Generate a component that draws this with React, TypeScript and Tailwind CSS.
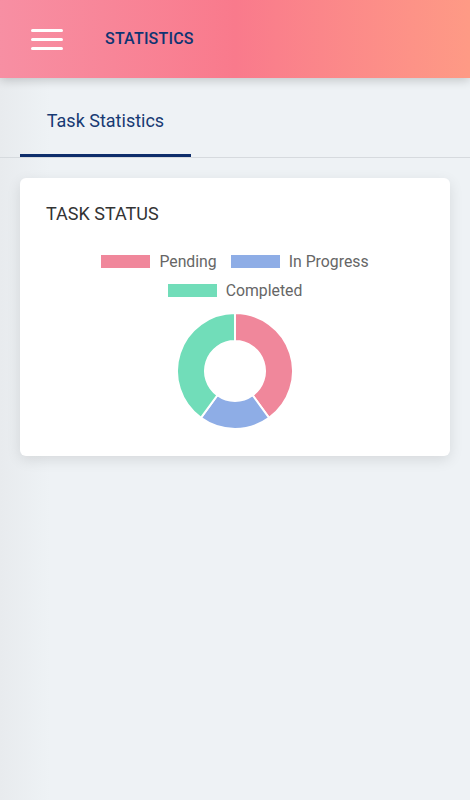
import React from "react";

const slices = [
  { label: "Pending", value: 2, color: "#f0879b" },
  { label: "In Progress", value: 1, color: "#8eade6" },
  { label: "Completed", value: 2, color: "#71ddb9" },
];

function arcPath(cx: number, cy: number, r1: number, r2: number, a0: number, a1: number) {
  const p = (r: number, a: number) => [cx + r * Math.sin(a), cy - r * Math.cos(a)];
  const [x0, y0] = p(r2, a0);
  const [x1, y1] = p(r2, a1);
  const [x2, y2] = p(r1, a1);
  const [x3, y3] = p(r1, a0);
  const large = a1 - a0 > Math.PI ? 1 : 0;
  return `M${x0} ${y0} A${r2} ${r2} 0 ${large} 1 ${x1} ${y1} L${x2} ${y2} A${r1} ${r1} 0 ${large} 0 ${x3} ${y3} Z`;
}

function Donut() {
  const total = slices.reduce((s, d) => s + d.value, 0);
  let start = 0;
  return (
    <svg width="120" height="120" viewBox="0 0 120 120">
      {slices.map((s) => {
        const a0 = start;
        const a1 = start + (s.value / total) * Math.PI * 2;
        start = a1;
        return (
          <path
            key={s.label}
            d={arcPath(60, 60, 30, 58, a0, a1)}
            fill={s.color}
            stroke="#fff"
            strokeWidth="2"
          />
        );
      })}
    </svg>
  );
}

function LegendItem({ label, color }: { label: string; color: string }) {
  return (
    <div className="flex items-center gap-[9px]">
      <span className="h-[13px] w-[49px]" style={{ backgroundColor: color }} />
      <span className="text-[15.8px] text-[#666]">{label}</span>
    </div>
  );
}

export default function App() {
  return (
    <div
      className="relative min-h-[800px] w-full overflow-hidden bg-[#eef2f5]"
      style={{ fontFamily: "Roboto, 'Noto Sans', sans-serif" }}
    >
      <div className="pointer-events-none absolute inset-y-0 left-0 w-[50px] bg-gradient-to-r from-[#e8ebee] to-transparent" />
      <header className="relative z-10 flex h-[78px] items-center bg-gradient-to-r from-[#f78fa3] via-[#f97a8c] to-[#fe9a85] shadow-[0_2px_10px_rgba(0,0,0,0.2)]">
        <div className="ml-[31px] flex w-[32px] flex-col gap-[6px]">
          <span className="h-[3px] w-full rounded bg-white" />
          <span className="h-[3px] w-full rounded bg-white" />
          <span className="h-[3px] w-full rounded bg-white" />
        </div>
        <h1 className="ml-[42px] text-[16px] font-medium tracking-[0.2px] text-[#0e3472]">STATISTICS</h1>
      </header>

      <nav className="relative flex h-[80px] border-b border-[#d6dade]">
        <div className="ml-[20px] flex w-[171px] items-center justify-center border-b-[3px] border-[#0e2e6b] pt-[8px]">
          <span className="text-[18px] text-[#173a73]">Task Statistics</span>
        </div>
      </nav>

      <section className="relative mx-[20px] mt-[20px] h-[278px] rounded-[6px] bg-white px-[26px] pt-[22px] shadow-[0_4px_14px_rgba(0,0,0,0.1)]">
        <h2 className="text-[18px] font-normal text-[#333]">TASK STATUS</h2>
        <div className="mt-[23px] flex flex-col items-center gap-[5px]">
          <div className="flex gap-[14px]">
            <LegendItem label="Pending" color="#f0879b" />
            <LegendItem label="In Progress" color="#8eade6" />
          </div>
          <LegendItem label="Completed" color="#71ddb9" />
        </div>
        <div className="mt-[9px] flex justify-center">
          <Donut />
        </div>
      </section>
    </div>
  );
}
